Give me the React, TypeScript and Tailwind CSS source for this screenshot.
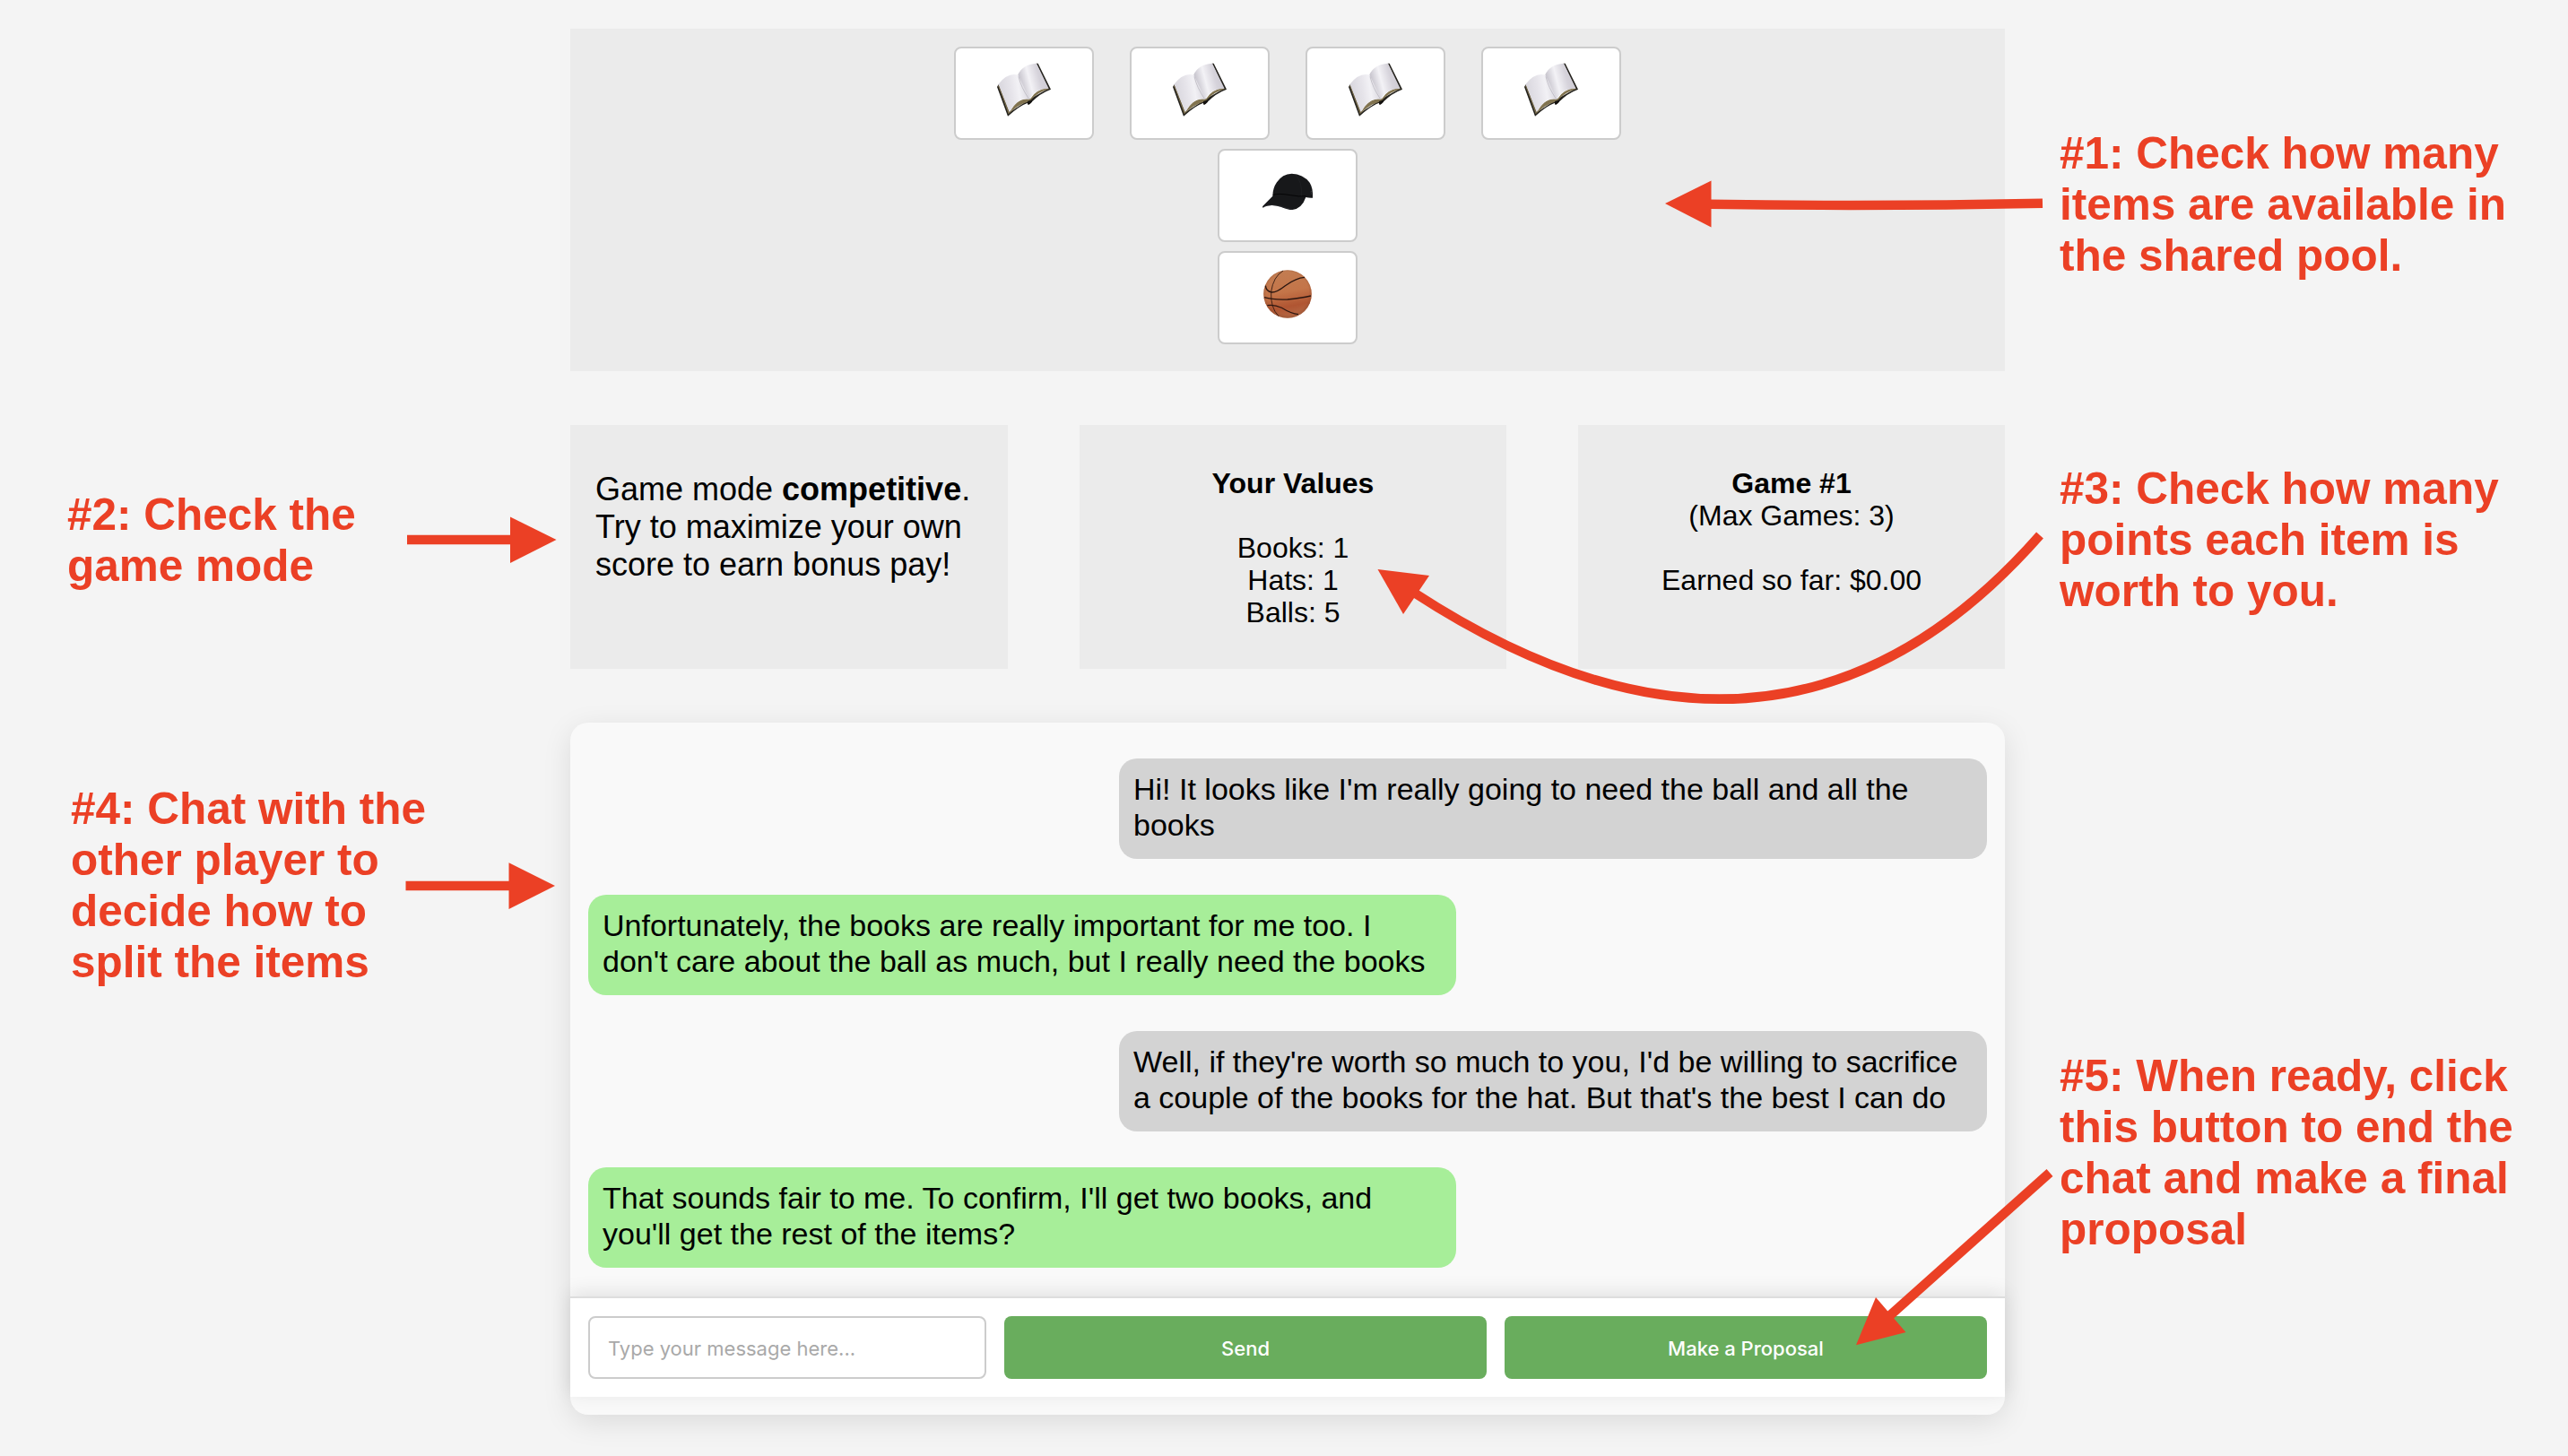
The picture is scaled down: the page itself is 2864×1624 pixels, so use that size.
import React from "react";

function Book() {
  return (
    <svg className="block size-[60px]" viewBox="216 150 180 180" aria-hidden="true">
      <defs>
        <linearGradient id="pageLeft" x1="0" y1="0.2" x2="1" y2="0">
          <stop offset="0" stopColor="#d9d7de" />
          <stop offset="0.35" stopColor="#e6e4ea" />
          <stop offset="0.6" stopColor="#f2f1f5" />
          <stop offset="0.85" stopColor="#dddbe2" />
          <stop offset="1" stopColor="#bdbac3" />
        </linearGradient>
        <linearGradient id="pageRight" x1="0" y1="0.3" x2="1" y2="0">
          <stop offset="0" stopColor="#c6c3cc" />
          <stop offset="0.3" stopColor="#f3f2f6" />
          <stop offset="0.6" stopColor="#d6d3db" />
          <stop offset="1" stopColor="#c8c5ce" />
        </linearGradient>
      </defs>
      <path d="M216 231 L221 222 L258 316 L322 274 L386 237 L347 152 L353 152 L396 239 Q360 252 331 282 Q327 290 319 290 L319 284 Q290 294 252 329 Z" fill="#24221d" />
      <path d="M220 226 L224 224 L260 312 Q285 266 322 271 L328 270 Q346 240 384 235 L390 238 Q352 248 327 277 L318 281 Q285 290 254 322 Z" fill="#81734f" />
      <path d="M220 222 Q252 180 288 191 L324 272 Q285 265 257 316 Z" fill="url(#pageLeft)" />
      <path d="M286 190 Q301 155 348 152 L389 236 Q342 236 324 273 Z" fill="url(#pageRight)" />
      <path d="M221 228 L256 318" stroke="#6c6146" strokeWidth="3" fill="none" />
      <path d="M288 196 Q296 232 323 272" stroke="#b2afb8" strokeWidth="3" fill="none" opacity="0.7" />
      <path d="M318 279 L331 275 L333 281 L322 290 L318 288 Z" fill="#14120f" />
    </svg>
  );
}

function Cap() {
  return (
    <svg className="block size-[60px]" viewBox="258 102 180 180" aria-hidden="true">
      <path d="M298 206 Q298 180 312 160 Q330 132 362 131 Q400 132 422 161 Q434 180 432 212 Q420 213 409 210 Q396 248 364 252 Q350 252 325 242 Q292 232 270 242 L266 246 L264 241 Z" fill="#17181a" />
      <path d="M299 202 Q318 196 358 203 Q388 209 409 206" stroke="#050506" strokeWidth="3" fill="none" />
      <path d="M272 239 Q296 231 325 240 Q348 249 364 250" stroke="#34353a" strokeWidth="1.5" fill="none" />
      <path d="M374 134 Q398 158 394 205" stroke="#212226" strokeWidth="2" fill="none" />
      <path d="M425 192 L430 191 M426 198 L430 198" stroke="#5a5b60" strokeWidth="2" />
    </svg>
  );
}

function Basketball() {
  return (
    <svg className="block size-[60px]" viewBox="258 444 180 180" aria-hidden="true">
      <defs>
        <linearGradient id="ball" x1="0.4" y1="0" x2="0.6" y2="1">
          <stop offset="0" stopColor="#c27d52" />
          <stop offset="0.45" stopColor="#c47549" />
          <stop offset="0.75" stopColor="#b05532" />
          <stop offset="1" stopColor="#b56b47" />
        </linearGradient>
        <radialGradient id="ballEdge" cx="0.5" cy="0.48" r="0.52">
          <stop offset="0.85" stopColor="#8a4a2c" stopOpacity="0" />
          <stop offset="1" stopColor="#8a4a2c" stopOpacity="0.5" />
        </radialGradient>
      </defs>
      <circle cx="348" cy="534" r="80.5" fill="url(#ball)" />
      <circle cx="348" cy="534" r="80.5" fill="url(#ballEdge)" />
      <g fill="none" stroke="#2b1610">
        <path d="M274 506 Q276 526 296 528 Q312 528 340 506 Q376 480 405 478" strokeWidth="4" />
        <path d="M270 545 Q300 554 348 552 Q392 548 426 540" strokeWidth="4" />
        <path d="M280 572 Q302 568 328 580 Q360 600 384 602" strokeWidth="3.5" />
        <path d="M333 456 Q300 476 293 526 Q290 580 318 608" strokeWidth="2.5" />
      </g>
    </svg>
  );
}

function Item({ children }: { children: React.ReactNode }) {
  return (
    <div className="flex h-[104px] w-[156px] justify-center rounded-[8px] border-2 border-[#ccc] bg-white pt-4">
      {children}
    </div>
  );
}

function Note({ lines, className }: { lines: string[]; className: string }) {
  return (
    <p className={`whitespace-nowrap text-[49.5px] leading-[57px] font-bold text-[#eb4025] ${className}`}>
      {lines.map((line) => (
        <span key={line} className="block">
          {line}
        </span>
      ))}
    </p>
  );
}

function Message({ lines, mine }: { lines: string[]; mine?: boolean }) {
  return (
    <div
      className={`h-[112px] w-[968px] rounded-[20px] px-4 pt-[14px] text-[34px] leading-[40px] whitespace-nowrap ${
        mine ? "self-start bg-[#a7ee99]" : "self-end bg-[#d3d3d3]"
      }`}
    >
      {lines.map((line) => (
        <span key={line} className="block">
          {line}
        </span>
      ))}
    </div>
  );
}

function Arrows() {
  return (
    <svg
      className="pointer-events-none absolute inset-0 h-[1624px] w-[2864px]"
      viewBox="0 0 2864 1624"
      fill="#eb4025"
      aria-hidden="true"
    >
      <g fill="none" stroke="#eb4025" strokeWidth="10.4">
        <path d="M2278 226.7 Q2090 230.6 1906 227.7" />
        <path d="M454 602 H571" />
        <path d="M452.5 988 H569" />
        <path d="M1577 661 Q1985 927 2275 597" />
        <path d="M2107 1468 L2286 1308" />
      </g>
      <path d="M1857 227 L1908.500 201.500 V253.500 Z" />
      <path d="M620.500 602 L569 576.500 V628 Z" />
      <path d="M619 988 L567.500 962.300 V1014 Z" />
      <path d="M1536.500 635 L1594 642 L1565 685 Z" />
      <path d="M2070 1500.300 L2092 1447 L2125.500 1486 Z" />
    </svg>
  );
}

export default function App() {
  return (
    <div className="relative flex h-[1624px] w-[2864px] overflow-hidden bg-[#f4f4f4] font-['Liberation_Sans',Arial,sans-serif] text-black">
      <aside className="flex w-[636px] shrink-0 flex-col pt-[545px]">
        <Note className="ml-[75px]" lines={["#2: Check the", "game mode"]} />
        <Note
          className="mt-[214px] ml-[79px]"
          lines={["#4: Chat with the", "other player to", "decide how to", "split the items"]}
        />
      </aside>

      <main className="flex w-[1600px] shrink-0 flex-col pt-8">
        <section className="flex h-[382px] flex-col items-center gap-[10px] bg-[#ebebeb] pt-5">
          <div className="flex gap-10">
            <Item><Book /></Item>
            <Item><Book /></Item>
            <Item><Book /></Item>
            <Item><Book /></Item>
          </div>
          <Item><Cap /></Item>
          <Item><Basketball /></Item>
        </section>

        <section className="mt-[60px] flex h-[272px] gap-20 text-center text-[32px] leading-[36px]">
          <div className="w-[488px] bg-[#ebebeb] px-7 pt-[51px] text-left text-[36px] leading-[42px] whitespace-nowrap">
            Game mode <b>competitive</b>.
            <br />
            Try to maximize your own
            <br />
            score to earn bonus pay!
          </div>
          <div className="w-[476px] bg-[#ebebeb] pt-[47px]">
            <b>Your Values</b>
            <p className="mt-9">Books: 1</p>
            <p>Hats: 1</p>
            <p>Balls: 5</p>
          </div>
          <div className="w-[476px] bg-[#ebebeb] pt-[47px]">
            <b>Game #1</b>
            <p>(Max Games: 3)</p>
            <p className="mt-9">Earned so far: $0.00</p>
          </div>
        </section>

        <section className="mt-[60px] flex h-[772px] flex-col rounded-[20px] bg-[#f9f9f9] shadow-[0_8px_32px_rgba(0,0,0,0.1)]">
          <div className="flex h-[640px] flex-col gap-10 px-5 pt-10">
            <Message lines={["Hi! It looks like I'm really going to need the ball and all the", "books"]} />
            <Message
              mine
              lines={["Unfortunately, the books are really important for me too. I", "don't care about the ball as much, but I really need the books"]}
            />
            <Message
              lines={["Well, if they're worth so much to you, I'd be willing to sacrifice", "a couple of the books for the hat. But that's the best I can do"]}
            />
            <Message mine lines={["That sounds fair to me. To confirm, I'll get two books, and", "you'll get the rest of the items?"]} />
          </div>
          <div className="flex h-[112px] gap-5 border-t-2 border-[#ddd] bg-white px-5 pt-5 font-['Inter',sans-serif] text-[22px] shadow-[0_-4px_20px_rgba(0,0,0,0.1)]">
            <input
              className="h-[70px] w-[444px] rounded-[8px] border-2 border-[#ccc] bg-white px-5 pt-0.5 placeholder:text-[#a9a9a9]"
              placeholder="Type your message here..."
            />
            <button className="h-[70px] w-[538px] rounded-[8px] bg-[#69ad5d] pt-0.5 font-medium text-white">Send</button>
            <button className="h-[70px] w-[538px] rounded-[8px] bg-[#69ad5d] pt-0.5 font-medium text-white">
              Make a Proposal
            </button>
          </div>
        </section>
      </main>

      <aside className="flex flex-1 flex-col pt-[142px] pl-[61px]">
        <Note className="" lines={["#1: Check how many", "items are available in", "the shared pool."]} />
        <Note className="mt-[203px]" lines={["#3: Check how many", "points each item is", "worth to you."]} />
        <Note
          className="mt-[484px]"
          lines={["#5: When ready, click", "this button to end the", "chat and make a final", "proposal"]}
        />
      </aside>

      <Arrows />
    </div>
  );
}
